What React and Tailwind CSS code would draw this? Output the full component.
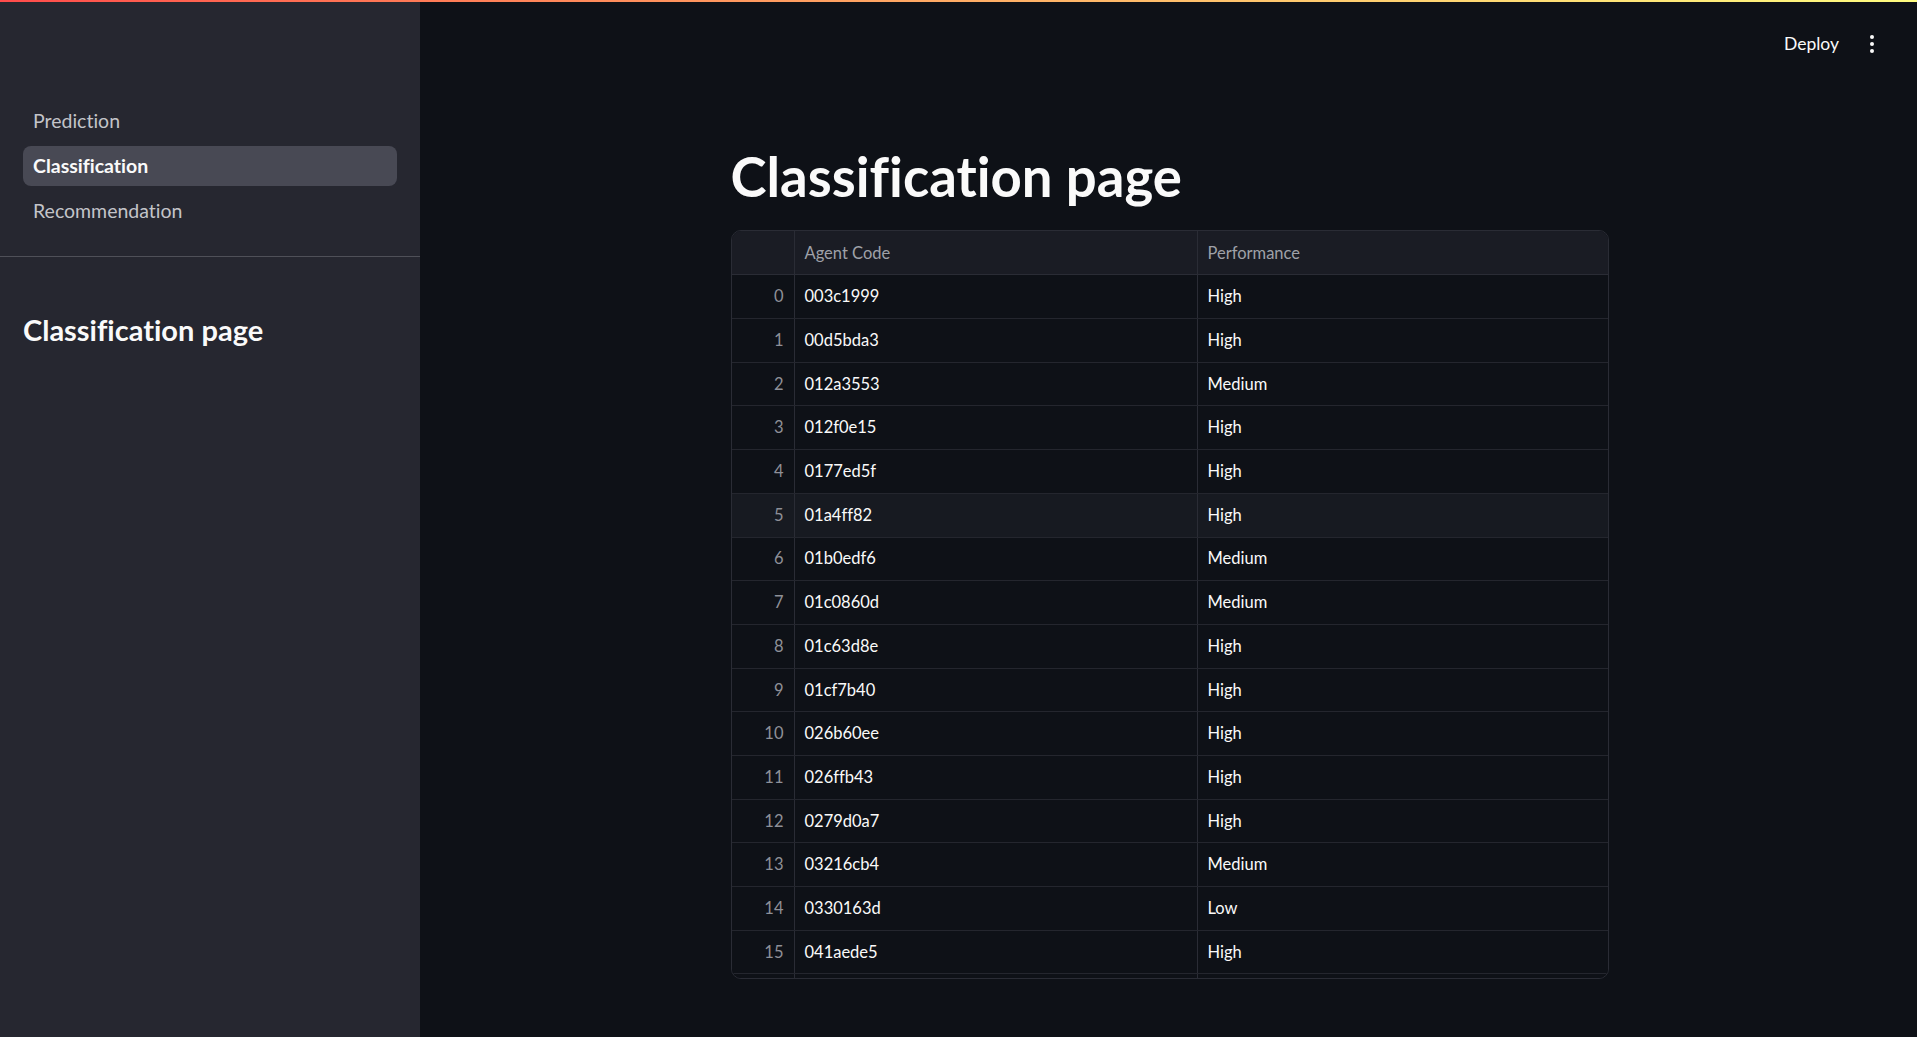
const rows = [
  ['003c1999', 'High'],
  ['00d5bda3', 'High'],
  ['012a3553', 'Medium'],
  ['012f0e15', 'High'],
  ['0177ed5f', 'High'],
  ['01a4ff82', 'High'],
  ['01b0edf6', 'Medium'],
  ['01c0860d', 'Medium'],
  ['01c63d8e', 'High'],
  ['01cf7b40', 'High'],
  ['026b60ee', 'High'],
  ['026ffb43', 'High'],
  ['0279d0a7', 'High'],
  ['03216cb4', 'Medium'],
  ['0330163d', 'Low'],
  ['041aede5', 'High'],
]

const pages = ['Prediction', 'Classification', 'Recommendation']

function Sidebar() {
  return (
    <aside className="w-[420px] shrink-0 bg-[#262730] flex flex-col">
      <ul className="px-[23px] pt-[99px] pb-[25px] flex flex-col gap-[5px] border-b border-[#4f5058]">
        {pages.map((p) => (
          <li
            key={p}
            className={`h-[40px] flex items-center px-[10px] rounded-[8px] text-[19.5px] ${
              p === 'Classification'
                ? 'bg-[#484954] text-[#fafafa] font-bold'
                : 'text-[#c3c4c9]'
            }`}
          >
            {p}
          </li>
        ))}
      </ul>
      <h2 className="px-[23px] pt-[56px] text-[29px] leading-[1.2] font-bold text-[#fafafa]">
        Classification page
      </h2>
    </aside>
  )
}

function DataTable() {
  return (
    <div className="mt-[21px] h-[749px] overflow-hidden rounded-[10px] border border-[#2a2c35] text-[16.5px]">
      <div className="grid grid-cols-[63px_403px_1fr] h-[44px] bg-[#1a1c24] border-b border-[#2a2c35] text-[#9fa1a8]">
        <div className="border-r border-[#2a2c35]" />
        <div className="flex items-center px-[10px] border-r border-[#2a2c35]">Agent Code</div>
        <div className="flex items-center px-[10px]">Performance</div>
      </div>
      {rows.map(([code, perf], i) => (
        <div
          key={code}
          className={`grid grid-cols-[63px_403px_1fr] h-[43.7px] border-b border-[#24262e] ${
            i === 5 ? 'bg-[#171a21]' : 'bg-[#0e1117]'
          }`}
        >
          <div className="flex items-center justify-end px-[10px] text-[#8e9098] border-r border-[#2a2c35]">
            {i}
          </div>
          <div className="flex items-center px-[10px] text-[#fafafa] border-r border-[#2a2c35]">
            {code}
          </div>
          <div className="flex items-center px-[10px] text-[#fafafa]">{perf}</div>
        </div>
      ))}
      <div className="grid grid-cols-[63px_403px_1fr] h-[43.7px] bg-[#0e1117]">
        <div className="border-r border-[#2a2c35]" />
        <div className="border-r border-[#2a2c35]" />
        <div />
      </div>
    </div>
  )
}

export default function App() {
  return (
    <div
      className="h-screen w-full overflow-hidden flex flex-col bg-[#0e1117] [font-variant-ligatures:none]"
      style={{ fontFamily: 'Lato, "Noto Sans", sans-serif' }}
    >
      <div className="h-[2px] shrink-0 bg-gradient-to-r from-[#ff4b4b] to-[#fffd80]" />
      <div className="flex flex-1 min-h-0">
        <Sidebar />
        <main className="flex-1 flex flex-col pl-[2px]">
          <header className="h-[84px] shrink-0 flex items-center justify-end pr-[38px] gap-[26px]">
            <span className="text-[17.5px] text-[#fafafa]">Deploy</span>
            <span className="flex flex-col items-center gap-[3px] w-[14px]">
              <span className="w-[4px] h-[4px] rounded-full bg-[#fafafa]" />
              <span className="w-[4px] h-[4px] rounded-full bg-[#fafafa]" />
              <span className="w-[4px] h-[4px] rounded-full bg-[#fafafa]" />
            </span>
          </header>
          <div className="w-[878px] mx-auto pt-[58px]">
            <h1 className="text-[54.5px] leading-[1.2] font-bold text-[#fafafa]">Classification page</h1>
            <DataTable />
          </div>
        </main>
      </div>
    </div>
  )
}
